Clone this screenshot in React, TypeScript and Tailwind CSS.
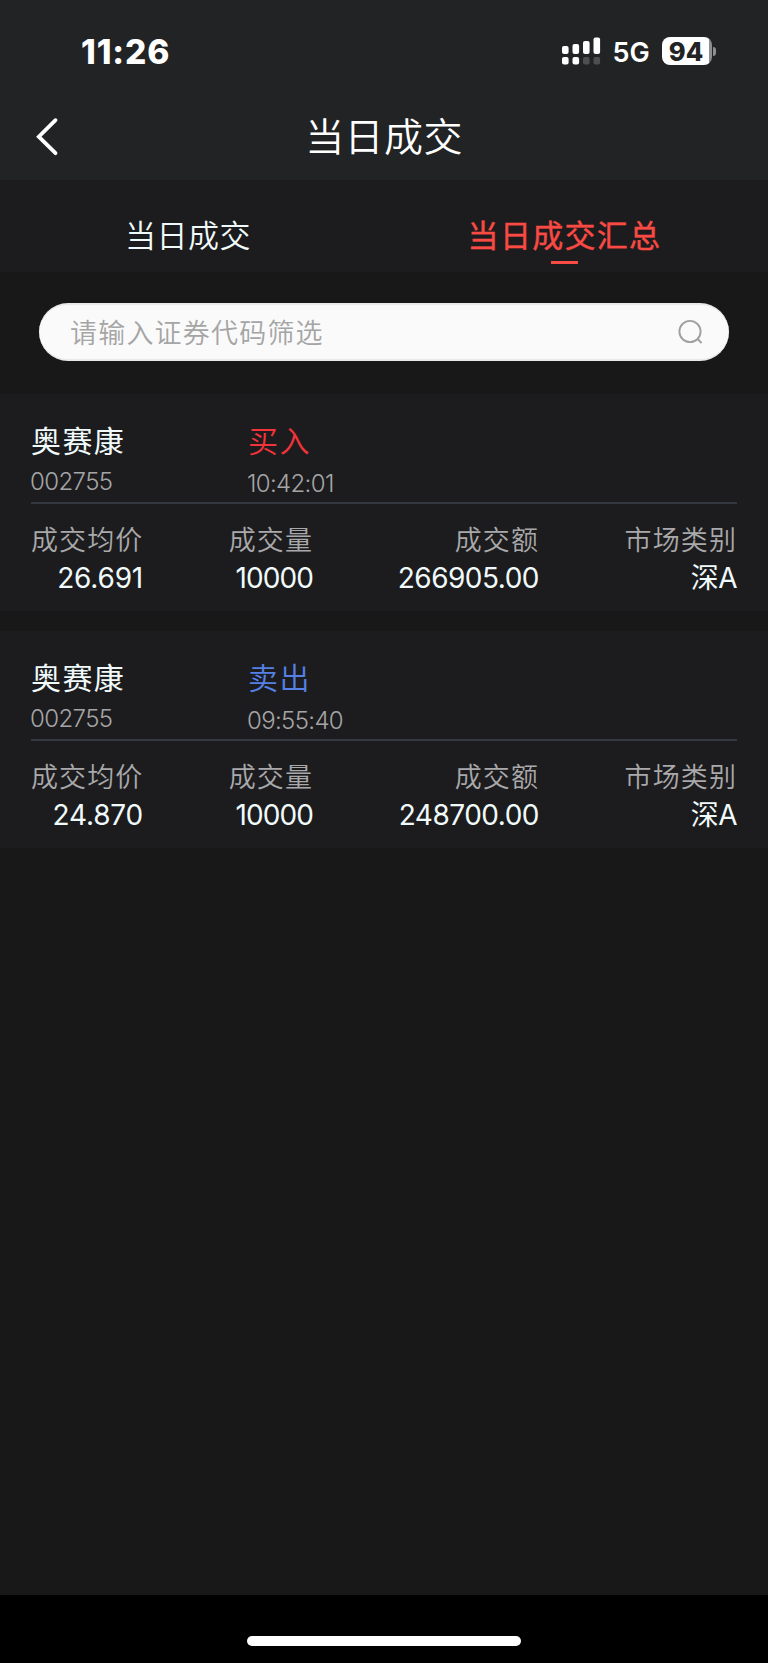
import React from 'react';
import { clsx } from 'clsx';

type Side = 'buy' | 'sell';

interface Deal {
  name: string;
  code: string;
  side: Side;
  time: string;
  price: string;
  volume: string;
  amount: string;
  market: string;
}

const DEALS: Deal[] = [
  { name: '奥赛康', code: '002755', side: 'buy', time: '10:42:01', price: '26.691', volume: '10000', amount: '266905.00', market: '深A' },
  { name: '奥赛康', code: '002755', side: 'sell', time: '09:55:40', price: '24.870', volume: '10000', amount: '248700.00', market: '深A' },
];

export default function App() {
  return (
    <div className="w-[768px] h-[1663px] flex flex-col overflow-hidden bg-[#181818] text-white font-['Inter','Noto_Sans_CJK_SC',sans-serif]">
      <header className="h-[180px] shrink-0 bg-[#222325]">
        <StatusBar />
        <NavBar title="当日成交" />
      </header>

      <nav className="h-[92px] shrink-0 grid grid-cols-[376px_376px] bg-[#1c1c1e]">
        <Tab label="当日成交" />
        <Tab label="当日成交汇总" active />
      </nav>

      <div className="pt-[31px] pb-[33px] px-[39px]">
        <SearchBox />
      </div>

      <main className="flex-1">
        {DEALS.map(d => <DealCard key={d.time} deal={d} />)}
      </main>

      <footer className="h-[68px] shrink-0 flex justify-center bg-black">
        <div className="mt-[41px] w-[274px] h-[10px] rounded-full bg-white" />
      </footer>
    </div>
  );
}

function StatusBar() {
  return (
    <div className="h-[102px] pl-[81px] pr-[52px] flex items-center justify-between">
      <span className="pt-px text-[33.5px] leading-10 font-extrabold tracking-[0.9px]">11:26</span>
      <div className="flex items-center">
        <SignalIcon />
        <span className="ml-[11px] pt-[3px] text-[27px] leading-8 font-semibold tracking-[0.2px]">5G</span>
        <div className="ml-[12px] flex items-center gap-px">
          <div className="w-[50px] h-[28px] pt-px pr-[2px] rounded-[8px] bg-[linear-gradient(to_right,#fff_94%,#8e8e90_94%)] flex items-center justify-center text-[25.5px] leading-7 font-extrabold text-[#222325]">
            94
          </div>
          <div className="w-[3px] h-[9px] rounded-r-full bg-[#8e8e90]" />
        </div>
      </div>
    </div>
  );
}

// Dual SIM signal: bars for the first line, dots for the second
function SignalIcon() {
  return (
    <svg width="39" height="28" viewBox="0 0 39 28" fill="#fff">
      <rect x="0" y="9" width="6.6" height="8" rx="2" />
      <rect x="10.5" y="7" width="6.6" height="10" rx="2" />
      <rect x="21" y="4" width="6.6" height="13" rx="2" />
      <rect x="31.5" y="0.5" width="6.6" height="16.5" rx="2" />
      <rect x="0" y="20" width="6.6" height="7.5" rx="2" />
      <rect x="10.5" y="20" width="6.6" height="7.5" rx="2" />
      <rect x="21" y="20" width="6.6" height="7.5" rx="2" fill="#4e4f51" />
      <rect x="31.5" y="20" width="6.6" height="7.5" rx="2" fill="#4e4f51" />
    </svg>
  );
}

function NavBar({ title }: { title: string }) {
  return (
    <div className="h-[70px] px-[32px] grid grid-cols-[1fr_auto_1fr] items-center">
      <button className="w-[32px] h-[44px]" aria-label="返回">
        <svg width="32" height="44" viewBox="0 0 32 44" fill="none" stroke="#fff" strokeWidth="3.8" strokeLinecap="round">
          <path d="M23.5 5.2 6.8 21.7 23.5 38.2" />
        </svg>
      </button>
      <h1 className="text-[39px] leading-[46px] font-[350] tracking-[0.4px]">{title}</h1>
    </div>
  );
}

function Tab({ label, active }: { label: string; active?: boolean }) {
  return (
    <button className={clsx('pt-[36px] flex flex-col items-center', active ? 'text-[#f94a43]' : 'text-[#f0fafa]')}>
      <span className={clsx('text-[31px] leading-10 whitespace-nowrap', active ? 'font-normal [-webkit-text-stroke:0.4px] tracking-[1.3px] pl-px' : 'font-[350] tracking-[0.5px]')}>
        {label}
      </span>
      {active && <span className="mt-[5px] w-[27px] h-[3px] bg-[#f94a43]" />}
    </button>
  );
}

function SearchBox() {
  return (
    <div className="w-[690px] h-[58px] pl-[31px] pr-[25px] flex items-center justify-between rounded-full bg-[#fafafa] border-y-2 border-[#e9e9e9]">
      <span className="pt-[3px] text-[27px] leading-9 font-[350] tracking-[1.2px] text-[#a5a5a5]">请输入证券代码筛选</span>
      <svg width="26" height="26" viewBox="0 0 26 26" fill="none" stroke="#a0a0a0" strokeWidth="1.9">
        <circle cx="12" cy="12.5" r="10.6" />
        <path d="M19.3 19.8 23.6 24" />
      </svg>
    </div>
  );
}

function DealCard({ deal }: { deal: Deal }) {
  const buy = deal.side === 'buy';
  return (
    <section className="mb-[19.6px] h-[217.4px] px-[31px] pt-[25px] bg-[#1c1c1e]">
      <div className="h-[83px] grid grid-cols-[216px_1fr]">
        <div>
          <div className="text-[30px] leading-[45px] font-normal tracking-[1.4px] text-[#f0fafa]">{deal.name}</div>
          <div className="-ml-px text-[24px] leading-[36px] font-[350] tracking-[-0.6px] text-[#a5a5a7]">{deal.code}</div>
        </div>
        <div>
          <div className={clsx('pl-px text-[30px] leading-[45px] font-[350] tracking-[1.4px]', buy ? 'text-[#f2333a]' : 'text-[#5580e6]')}>
            {buy ? '买入' : '卖出'}
          </div>
          <div className="mt-[2px] text-[24px] leading-[36px] font-[350] tracking-[-0.65px] text-[#a5a5a7]">{deal.time}</div>
        </div>
      </div>

      <div className="h-[2px] bg-[#343840]" />

      <div className="pt-[19px] grid grid-cols-[112px_170px_226px_198px] text-right">
        <Cell label="成交均价" value={deal.price} tracking="tracking-[-0.2px]" />
        <Cell label="成交量" value={deal.volume} tracking="tracking-[-0.9px]" />
        <Cell label="成交额" value={deal.amount} tracking="tracking-[-0.5px]" />
        <Cell label="市场类别" value={deal.market} tracking="tracking-[-0.5px]" />
      </div>
    </section>
  );
}

function Cell({ label, value, tracking }: { label: string; value: string; tracking: string }) {
  return (
    <div className="whitespace-nowrap">
      <div className="text-[27px] leading-[36px] font-[350] tracking-[1.1px] text-[#a9a9ab]">{label}</div>
      <div className={clsx('text-[28px] leading-[39px] font-[370] text-[#f0fafa]', tracking)}>{value}</div>
    </div>
  );
}
